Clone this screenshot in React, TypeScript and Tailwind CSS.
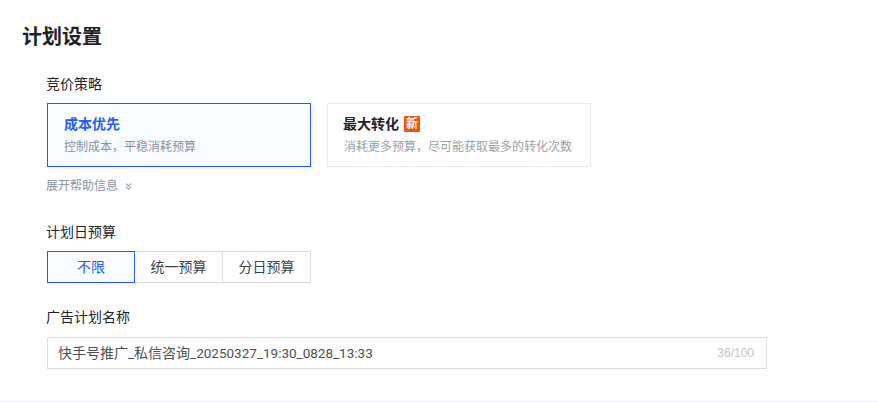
import { ChevronsDown } from "lucide-react";

const font = "font-['Liberation_Sans','Noto_Sans_CJK_SC',sans-serif]";

const App = () => {
  return (
    <div className={`${font} h-[402px] w-[878px] overflow-hidden bg-white flex flex-col`}>
      <div className="flex-1 pl-[22px] pt-[23px]">
        <h1 className="text-[20px] leading-[28px] font-bold text-[#1f2329]">计划设置</h1>

        <div className="pl-[24px] pt-[23px]">
          <div className="text-[14px] leading-[20px] text-[#1f2329]">竞价策略</div>
          <div className="mt-[9px] ml-px flex gap-[16px]">
            <div className="h-[64px] w-[264px] border border-[#1f5ef5] bg-[#f9fcff] pl-[16px] pt-[10px]">
              <div className="text-[14px] leading-[20px] font-bold text-[#1f5ef5]">成本优先</div>
              <div className="mt-[4px] text-[12px] leading-[18px] text-[#8b929c]">{"控制成本\uFF0C平稳消耗预算"}</div>
            </div>
            <div className="h-[64px] w-[264px] border border-[#e8eaed] bg-white pl-[16px] pt-[10px]">
              <div className="flex items-center text-[14px] leading-[20px] font-bold text-[#1f2329]">
                <span className="-ml-px">最大转化</span>
                <span className="ml-[5px] flex h-[16px] w-[16px] items-center justify-center rounded-[1px] bg-[#f4540f] text-[12px] leading-none font-bold text-white">
                  新
                </span>
              </div>
              <div className="mt-[4px] text-[12px] leading-[18px] text-[#9aa0a8]">{"消耗更多预算\uFF0C尽可能获取最多的转化次数"}</div>
            </div>
          </div>

          <div className="mt-[10px] flex items-center text-[12px] leading-[18px] text-[#8b929c]">
            展开帮助信息
            <ChevronsDown className="ml-[5px] h-[11px] w-[11px]" strokeWidth={2.25} />
          </div>

          <div className="mt-[27px] text-[14px] leading-[20px] text-[#1f2329]">计划日预算</div>
          <div className="mt-[9px] ml-px flex h-[32px] w-[264px] text-[14px]">
            <div className="flex w-[88px] items-center justify-center border border-[#1f5ef5] bg-[#f9fcff] text-[#1f5ef5]">不限</div>
            <div className="flex w-[88px] items-center justify-center border-y border-r border-[#dcdcdc] text-[#3f444b]">统一预算</div>
            <div className="flex w-[88px] items-center justify-center border-y border-r border-[#dcdcdc] text-[#3f444b]">分日预算</div>
          </div>

          <div className="mt-[24px] text-[14px] leading-[20px] text-[#1f2329]">广告计划名称</div>
          <div className="mt-[10px] ml-px flex h-[32px] w-[720px] items-center justify-between border border-[#dcdcdc] pl-[10px] pr-[12px]">
            <span className="text-[14px] text-[#4b5057]">
              快手号推广<span className="font-['Roboto'] text-[13.5px]">_</span>私信咨询
              <span className="font-['Roboto'] text-[13.5px]">_20250327_19:30_0828_13:33</span>
            </span>
            <span className="text-[12px] text-[#c4c4c4]">36/100</span>
          </div>
        </div>
      </div>
      <div className="h-px bg-[#f0f0f5]" />
    </div>
  );
};

export default App;
